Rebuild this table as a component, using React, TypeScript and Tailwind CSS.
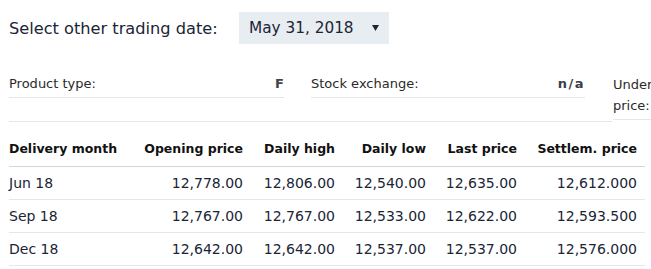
import React from 'react';

const rows = [
  { month: 'Jun 18', open: '12,778.00', high: '12,806.00', low: '12,540.00', last: '12,635.00', settle: '12,612.000' },
  { month: 'Sep 18', open: '12,767.00', high: '12,767.00', low: '12,533.00', last: '12,622.00', settle: '12,593.500' },
  { month: 'Dec 18', open: '12,642.00', high: '12,642.00', low: '12,537.00', last: '12,537.00', settle: '12,576.000' },
];

const cols = 'grid grid-cols-[125px_109px_92px_91px_91px_120px] pr-[8px]';

export default function App() {
  return (
    <div className="h-[269px] w-[651px] overflow-hidden bg-white pl-[9px] font-['DejaVu_Sans',sans-serif] text-[#1a2535]">
      {/* Date selector */}
      <div className="mt-[12px] flex h-[32px] items-center">
        <span className="w-[230px] pt-[2px] text-[16.2px] leading-[20px]">Select other trading date:</span>
        <div className="flex h-[32px] w-[150px] items-center bg-[#e8edf1] pl-[10px]">
          <span className="w-[123px] text-[15.3px] leading-[20px]">May 31, 2018</span>
          <svg width="7" height="7" viewBox="0 0 7 7" className="mt-[1px]">
            <polygon points="0,0 7,0 3.5,6" fill="#1a2535" />
          </svg>
        </div>
      </div>

      {/* Product info */}
      <div className="mt-[27px] flex items-start">
        <div className="flex h-[51px] w-[603px] shrink-0 items-start gap-[27px] border-b border-[#e6e6e6]">
          <div className="flex w-[275px] justify-between border-b border-[#e6e6e6] pt-[5px] pb-[5px] text-[13px] leading-[16px]">
            <span className="text-[#2a2a2a]">Product type:</span>
            <span className="font-bold text-[#444]">F</span>
          </div>
          <div className="flex w-[274px] justify-between border-b border-[#e6e6e6] pt-[5px] pb-[5px] text-[13px] leading-[16px]">
            <span className="text-[#2a2a2a]">Stock exchange:</span>
            <span className="font-bold tracking-[1.5px] text-[#3a3f4a]">n/a</span>
          </div>
        </div>
        <div className="ml-[1px] w-[275px] shrink-0 border-b border-[#e6e6e6] pt-[3px] pb-[3px] text-[13px] leading-[21px]">
          <span className="block w-[90px] text-[#2a2a2a]">Underlying price:</span>
        </div>
      </div>

      {/* Prices table */}
      <div className="mt-[12px] w-[636px]">
        <div className={`${cols} h-[33px] items-center border-b border-[#d6d6d6] pb-[1px] text-[12.5px] font-bold text-[#111]`}>
          <div>Delivery month</div>
          <div className="text-right">Opening price</div>
          <div className="text-right">Daily high</div>
          <div className="text-right">Daily low</div>
          <div className="text-right">Last price</div>
          <div className="text-right">Settlem. price</div>
        </div>
        {rows.map((r) => (
          <div key={r.month} className={`${cols} h-[33px] items-center border-b border-[#e6e6e6] text-[14px]`}>
            <div>{r.month}</div>
            <div className="text-right">{r.open}</div>
            <div className="text-right">{r.high}</div>
            <div className="text-right">{r.low}</div>
            <div className="text-right">{r.last}</div>
            <div className="text-right">{r.settle}</div>
          </div>
        ))}
      </div>
    </div>
  );
}
